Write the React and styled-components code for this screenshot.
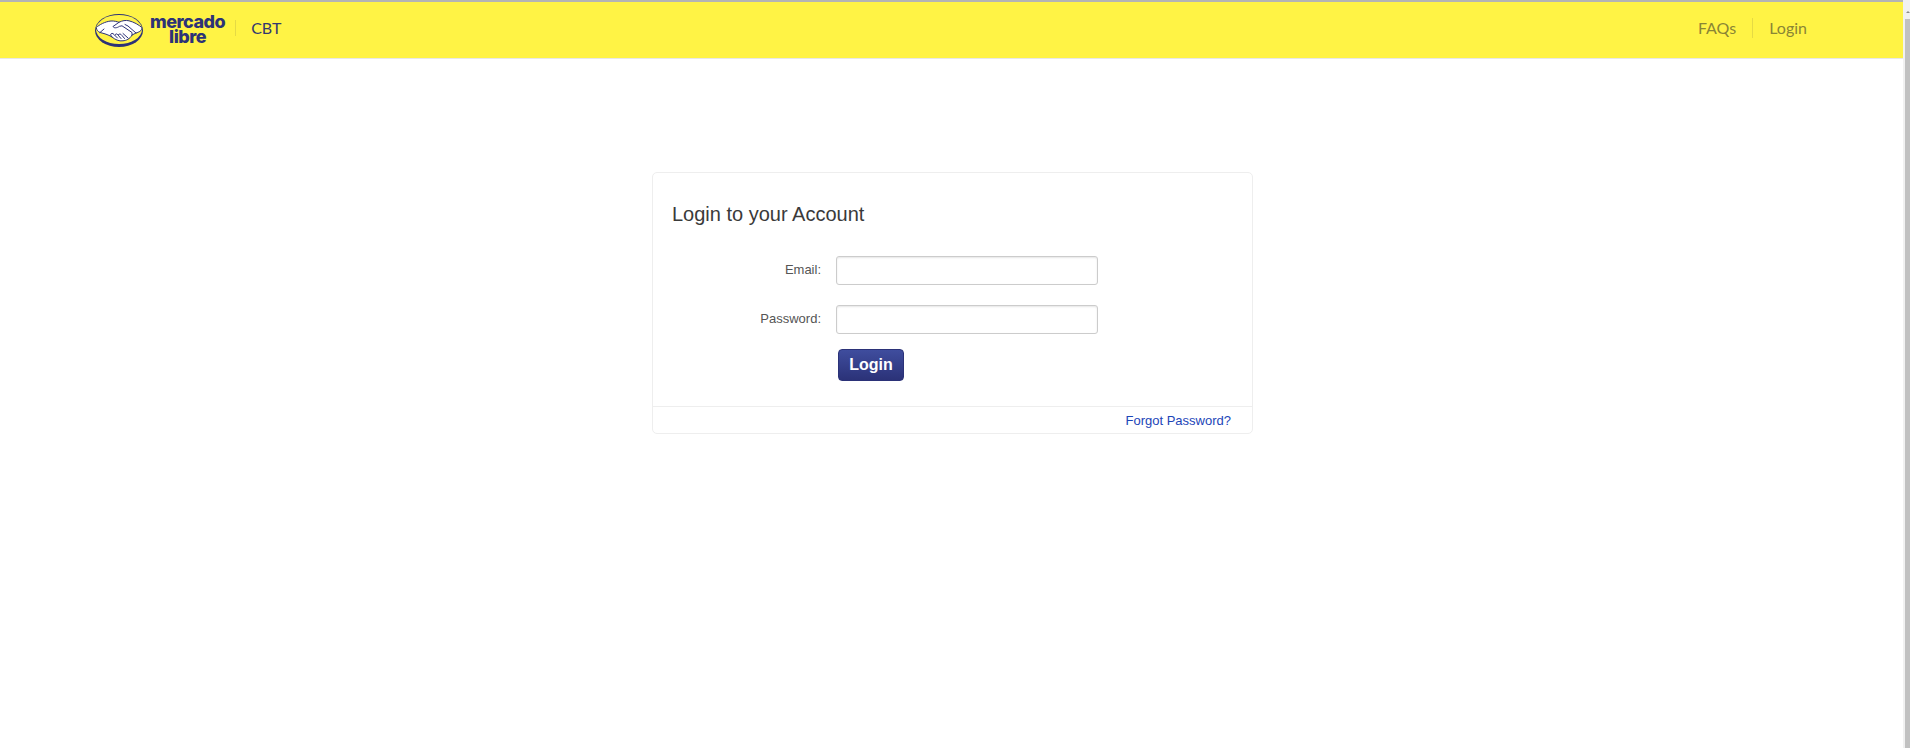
import React from "react";
import styled, { createGlobalStyle } from "styled-components";

const GlobalStyle = createGlobalStyle`
  html, body {
    margin: 0;
    padding: 0;
    background: #fff;
    overflow: hidden;
  }
`;

const Page = styled.div`
  width: 1910px;
  height: 748px;
  display: flex;
  overflow: hidden;
`;

const Main = styled.div`
  width: 1903px;
  display: flex;
  flex-direction: column;
`;

const Header = styled.header`
  height: 56px;
  box-sizing: content-box;
  background: #fff345;
  border-top: 2px solid #b4b4b4;
  border-bottom: 1px solid #e8e8e8;
  display: flex;
  align-items: center;
  justify-content: space-between;
  padding: 0 80px 0 95px;
  font-family: "Lato", sans-serif;
`;

const Brand = styled.div`
  display: flex;
  align-items: center;
  padding-bottom: 3px;
`;

const LogoImage = styled.svg`
  display: block;
  margin-top: 3px;
`;

const LogoWords = styled.div`
  font-family: "Inter", sans-serif;
  font-weight: 800;
  color: #2d3277;
  font-size: 18px;
  line-height: 15px;
  letter-spacing: -0.5px;
  text-align: center;
  margin: 1px 0 0 7px;
`;

const BrandName = styled.span`
  color: #33386f;
  font-size: 16px;
  margin: 0 0 2px 10px;
  padding-left: 15px;
  border-left: 1px solid #e5da44;
  line-height: 16px;
`;

const Nav = styled.nav`
  display: flex;
  align-items: center;
  padding-bottom: 4px;
`;

const NavLink = styled.a`
  color: #8a8535;
  font-size: 16px;
  line-height: 20px;
  padding: 0 16px;
  & + & {
    border-left: 1px solid #e5da44;
  }
`;

const Content = styled.main`
  display: flex;
  justify-content: center;
  padding-top: 113px;
  font-family: "Liberation Sans", sans-serif;
`;

const Card = styled.section`
  width: 601px;
  box-sizing: border-box;
  margin-left: 2px;
  border: 1px solid #eee;
  border-radius: 5px;
`;

const CardBody = styled.div`
  padding: 29px 20px 25px 19px;
`;

const Title = styled.h2`
  margin: 0 0 30px;
  font-size: 20px;
  font-weight: 400;
  line-height: 24px;
  color: #3a3a3a;
`;

const Field = styled.div`
  display: flex;
  align-items: center;
  margin-bottom: 20px;
  &:last-of-type {
    margin-bottom: 15px;
  }
`;

const Label = styled.label`
  width: 149px;
  margin-right: 15px;
  text-align: right;
  font-size: 13px;
  line-height: 15px;
  padding-bottom: 2px;
  color: #555;
`;

const Input = styled.input`
  width: 262px;
  height: 29px;
  box-sizing: border-box;
  border: 1px solid #ccc;
  border-radius: 3px;
  box-shadow: inset 0 1px 2px rgba(0, 0, 0, 0.1);
  outline: none;
`;

const Button = styled.button`
  display: block;
  margin-left: 166px;
  width: 66px;
  height: 32px;
  padding: 0;
  border: 1px solid #2b3278;
  border-radius: 4px;
  background: linear-gradient(#3f4d9e, #2b3278);
  color: #fff;
  font-family: inherit;
  font-size: 16px;
  font-weight: 700;
`;

const CardFooter = styled.div`
  height: 26px;
  border-top: 1px solid #eee;
  display: flex;
  align-items: center;
  justify-content: flex-end;
  padding-right: 21px;
`;

const Forgot = styled.a`
  color: #1c45b8;
  font-size: 13px;
`;

const Scrollbar = styled.div`
  width: 7px;
  box-sizing: border-box;
  padding-left: 2px;
  background: #f1f1f1;
  display: flex;
  flex-direction: column;
`;

const Arrow = styled.div`
  height: 19px;
  background: #f1f1f1;
  position: relative;
  &::after {
    content: "";
    position: absolute;
    top: 11px;
    right: 0;
    border-left: 2px solid transparent;
    border-right: 2px solid transparent;
    border-bottom: 2px solid #8a8a8a;
  }
`;

const Thumb = styled.div`
  flex: 1;
  background: #c1c1c1;
`;

const Logo = () => (
  <LogoImage width="48" height="33" viewBox="0 0 48 33">
    <ellipse cx="24" cy="16.5" rx="24" ry="16.5" fill="#2d3277" />
    <ellipse cx="24" cy="15.5" rx="23" ry="14.6" fill="#fff345" />
    <path
      d="M1.3 13.5 C4 11 10 7.5 16 7 C19 6.8 22 7.6 24 8.3 C27 6.6 31 6 34 6.8 C39 8 44 11 46.8 13.5 C47 17 44 18 41 19 L37 21 C35 25 31 26.5 28 26.8 C24 27.5 20 25.5 17 23 C13 20.5 9 19.5 5 18.5 C3 17.5 1.5 16 1.3 13.5Z"
      fill="#fff"
      stroke="#2d3277"
      strokeWidth="1"
    />
    <path
      d="M24 8.3 L18 12.5 C19 14.5 22 14 24.5 12.3 L27 11.8 L37 18.5 L37 21 M41 19 L33 12 L30 10.5 M5 18.5 L9 15 M17 23 L15.5 20.8 C16 19 18 19 19 20.5 L22.5 24 M20 21 C20.5 19.5 22 19.5 23 21 L26 24.5 M23.5 20.5 C24.5 19.5 26 20 27 21.5 L29.5 24.5 M28 19.5 L33 24"
      fill="none"
      stroke="#2d3277"
      strokeWidth="1"
      strokeLinecap="round"
      strokeLinejoin="round"
    />
  </LogoImage>
);

export default function App() {
  return (
    <Page>
      <GlobalStyle />
      <Main>
        <Header>
          <Brand>
            <Logo />
            <LogoWords>
              mercado
              <br />
              libre
            </LogoWords>
            <BrandName>CBT</BrandName>
          </Brand>
          <Nav>
            <NavLink>FAQs</NavLink>
            <NavLink>Login</NavLink>
          </Nav>
        </Header>
        <Content>
          <Card>
            <CardBody>
              <Title>Login to your Account</Title>
              <Field>
                <Label>Email:</Label>
                <Input type="text" />
              </Field>
              <Field>
                <Label>Password:</Label>
                <Input type="password" />
              </Field>
              <Button>Login</Button>
            </CardBody>
            <CardFooter>
              <Forgot>Forgot Password?</Forgot>
            </CardFooter>
          </Card>
        </Content>
      </Main>
      <Scrollbar>
        <Arrow />
        <Thumb />
      </Scrollbar>
    </Page>
  );
}
